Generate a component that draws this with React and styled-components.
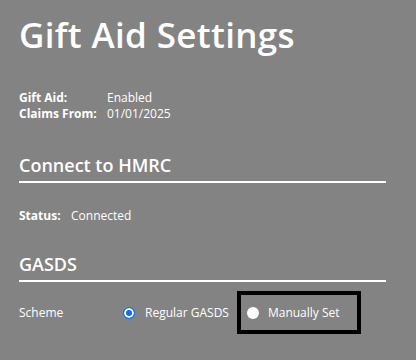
import styled, { createGlobalStyle } from 'styled-components';

const GlobalStyle = createGlobalStyle`
  html, body {
    margin: 0;
    padding: 0;
    background: #838383;
  }
  body {
    font-family: 'Open Sans', 'Noto Sans', sans-serif;
    color: #fff;
  }
`;

const Page = styled.div`
  width: 416px;
  height: 360px;
  box-sizing: border-box;
  padding: 12px 30px 0 19px;
  overflow: hidden;
`;

const Title = styled.h1`
  margin: 0;
  font-size: 35px;
  font-weight: 600;
  line-height: 46px;
  letter-spacing: 0.35px;
`;

const InfoTable = styled.div`
  display: grid;
  grid-template-columns: ${(p) => p.labelWidth}px auto;
  margin-top: ${(p) => p.top}px;
  font-size: 12px;
  line-height: 16px;
`;

const Label = styled.span`
  font-weight: 700;
`;

const Value = styled.span`
  font-weight: 400;
`;

const SectionHead = styled.h2`
  margin: ${(p) => p.top}px 0 0;
  padding-bottom: 4px;
  font-size: 18px;
  font-weight: 600;
  line-height: 24px;
  border-bottom: 2px solid #fff;
`;

const SchemeRow = styled.div`
  display: flex;
  align-items: center;
  margin-top: 9px;
  font-size: 12px;
`;

const SchemeLabel = styled.span`
  width: 104px;
`;

const Option = styled.label`
  display: flex;
  align-items: center;
  gap: ${(p) => (p.outlined ? '9px' : '10px')};
  box-sizing: border-box;
  height: 43px;
  padding: 0 ${(p) => (p.outlined ? '17px' : '8px')} 0 ${(p) => (p.outlined ? '6px' : '0')};
  border: ${(p) => (p.outlined ? '4px solid #000' : 'none')};
`;

const Radio = styled.span`
  flex: none;
  width: 12px;
  height: 12px;
  border-radius: 50%;
  box-sizing: border-box;
  background: ${(p) => (p.checked ? '#0a6cf5' : '#fff')};
  border: ${(p) => (p.checked ? '1.5px solid #0a6cf5' : 'none')};
  box-shadow: ${(p) => (p.checked ? 'inset 0 0 0 2px #fff' : 'none')};
`;

export default function App() {
  return (
    <>
      <GlobalStyle />
      <Page>
        <Title>Gift Aid Settings</Title>
        <InfoTable labelWidth={88} top={32}>
          <Label>Gift Aid:</Label>
          <Value>Enabled</Value>
          <Label>Claims From:</Label>
          <Value>01/01/2025</Value>
        </InfoTable>
        <SectionHead top={31}>Connect to HMRC</SectionHead>
        <InfoTable labelWidth={52} top={25}>
          <Label>Status:</Label>
          <Value>Connected</Value>
        </InfoTable>
        <SectionHead top={28}>GASDS</SectionHead>
        <SchemeRow>
          <SchemeLabel>Scheme</SchemeLabel>
          <Option>
            <Radio checked />
            Regular GASDS
          </Option>
          <Option outlined>
            <Radio />
            Manually Set
          </Option>
        </SchemeRow>
      </Page>
    </>
  );
}
